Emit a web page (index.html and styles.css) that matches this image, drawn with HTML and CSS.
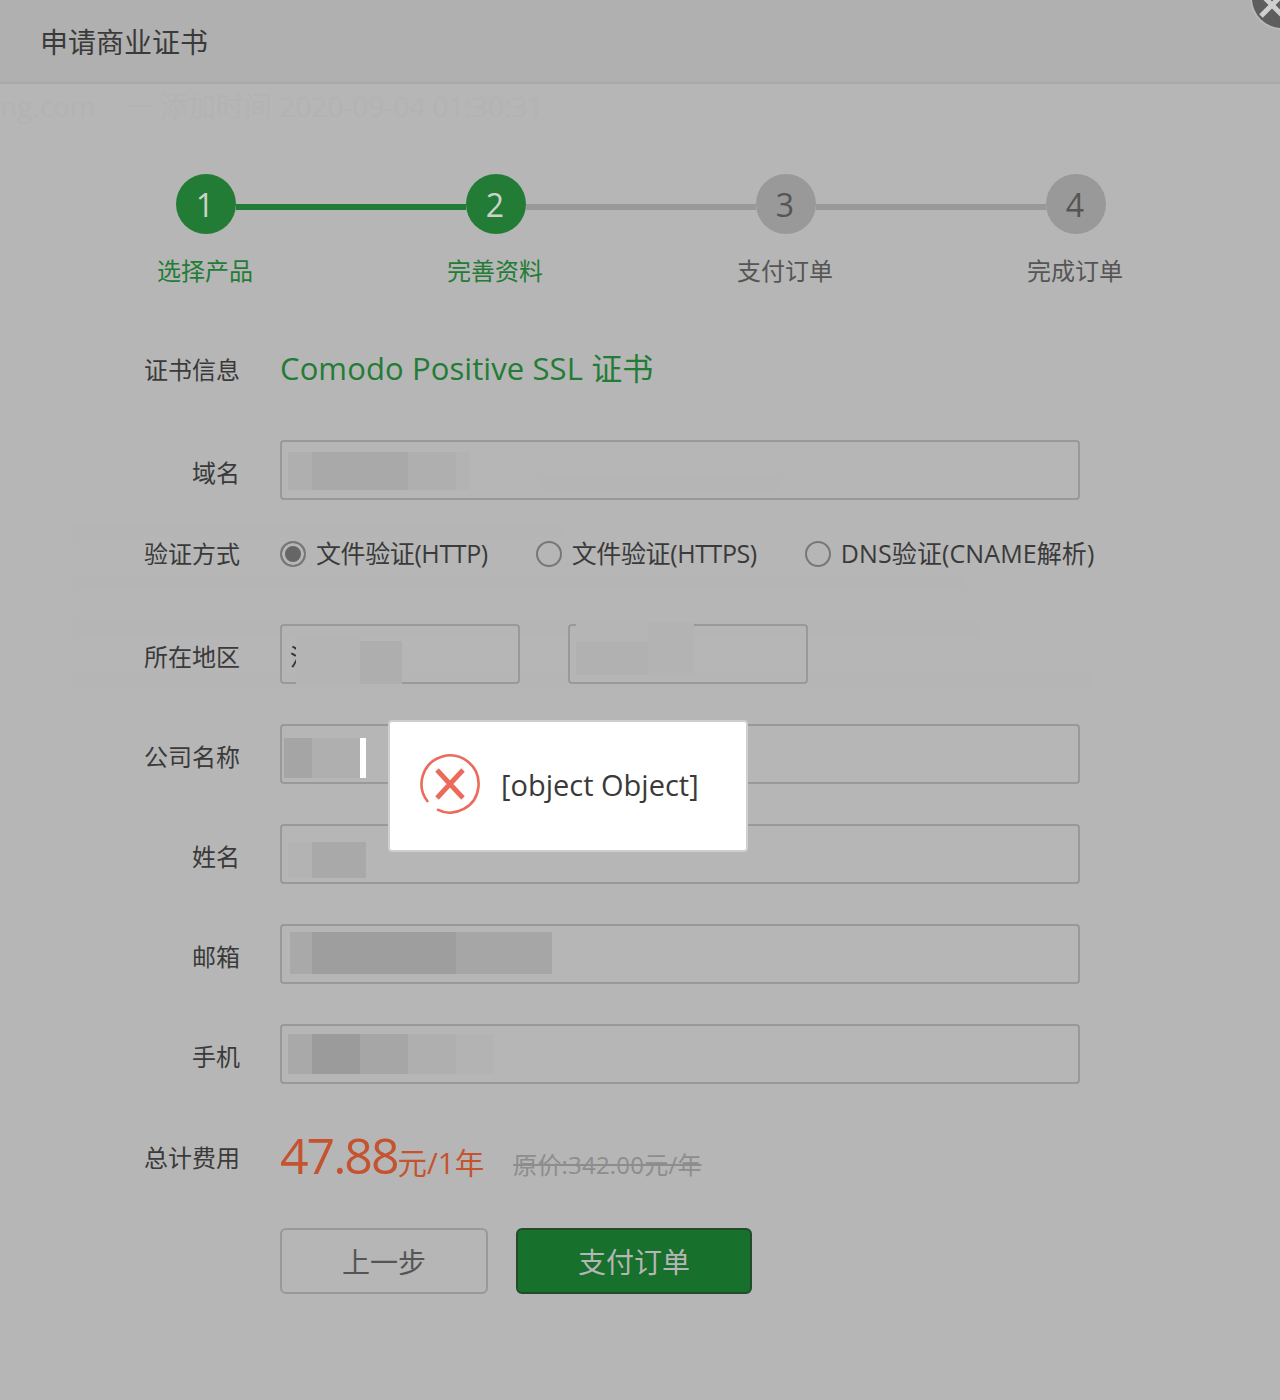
FILE: index.html
```html
<!DOCTYPE html>
<html lang="zh-CN">
<head>
<meta charset="utf-8">
<title>申请商业证书</title>
<link rel="stylesheet" href="styles.css">
</head>
<body>
<div class="page">
  <div class="behind" aria-hidden="true">
    <div class="behind-text"><span class="behind-host">ng.com</span><span class="behind-dash">一</span><span>添加时间 2020-09-04 01:30:31</span></div>
    <i class="behind-bar bar-a"></i>
    <i class="behind-bar bar-b"></i>
    <i class="behind-bar bar-c"></i>
    <i class="behind-bar bar-d"></i>
    <i class="behind-bar bar-e"></i>
  </div>

  <header class="header"><h1 class="title">申请商业证书</h1></header>
  <button class="close" aria-label="关闭"><svg viewBox="0 0 60 60" width="60" height="60"><path d="M9 26 31 48M31 26 9 48" stroke="#cfcfcf" stroke-width="5" fill="none"/></svg></button>

  <section class="stepper">
    <div class="rail">
      <span class="dot done">1</span><span class="line done"></span>
      <span class="dot done">2</span><span class="line"></span>
      <span class="dot">3</span><span class="line"></span>
      <span class="dot">4</span>
    </div>
    <div class="step-labels">
      <span class="step-label done">选择产品</span>
      <span class="step-label done">完善资料</span>
      <span class="step-label">支付订单</span>
      <span class="step-label">完成订单</span>
    </div>
  </section>

  <form class="form">
    <div class="row row-cert">
      <label class="label">证书信息</label>
      <div class="cert-name">Comodo Positive SSL 证书</div>
    </div>
    <div class="row row-input">
      <label class="label low">域名</label>
      <div class="input wide">
        <div class="mosaic mo-domain"><i class="m w24 c1"></i><i class="m w96 c2"></i><i class="m w48 c3"></i><i class="m w14 c4"></i></div>
      </div>
    </div>
    <div class="row row-radio">
      <label class="label">验证方式</label>
      <div class="radios">
        <span class="radio tight on"><i class="radio-mark"></i>文件验证(HTTP)</span>
        <span class="radio tight"><i class="radio-mark"></i>文件验证(HTTPS)</span>
        <span class="radio loose"><i class="radio-mark"></i>DNS验证(CNAME解析)</span>
      </div>
    </div>
    <div class="row row-input">
      <label class="label low">所在地区</label>
      <div class="region">
        <div class="input half">
          <span class="under">河</span>
          <div class="mosaic mo-region1"><i class="m w64 c5"></i><i class="m w42 c3b lowered-s"></i></div>
        </div>
        <div class="input half">
          <div class="mosaic mo-region2"><i class="m w72 step-block"></i><i class="m w46 c6"></i></div>
        </div>
      </div>
    </div>
    <div class="row row-input">
      <label class="label low">公司名称</label>
      <div class="input wide">
        <div class="mosaic mo-company"><i class="m w28 c7"></i><i class="m w48 c3"></i><i class="m w6 white"></i></div>
      </div>
    </div>
    <div class="row row-input">
      <label class="label low">姓名</label>
      <div class="input wide">
        <div class="mosaic mo-name"><i class="m w24 c6"></i><i class="m w54 c2"></i></div>
      </div>
    </div>
    <div class="row row-input">
      <label class="label low">邮箱</label>
      <div class="input wide">
        <div class="mosaic mo-email"><i class="m w22 c2"></i><i class="m w144 c8"></i><i class="m w96 c9"></i></div>
      </div>
    </div>
    <div class="row row-input">
      <label class="label low">手机</label>
      <div class="input wide">
        <div class="mosaic mo-phone"><i class="m w24 c2"></i><i class="m w48 c10"></i><i class="m w48 c9"></i><i class="m w48 c3"></i><i class="m w38 c4"></i></div>
      </div>
    </div>
    <div class="row row-total">
      <label class="label">总计费用</label>
      <div class="price">
        <span class="amount">47.88</span><span class="unit">元/1年</span>
        <s class="origin">原价:342.00元/年</s>
      </div>
    </div>
    <div class="row row-actions">
      <button type="button" class="btn btn-back">上一步</button>
      <button type="button" class="btn btn-pay">支付订单</button>
    </div>
  </form>

  <div class="toast">
    <svg class="toast-icon" viewBox="0 0 60 60" width="60" height="60">
      <path d="M17 55.300A28.500 28.500 0 1 0 8 48" fill="none" stroke="#ec6a5c" stroke-width="2.600"/>
      <path d="M17 16 43 44M43 16 17 44" fill="none" stroke="#ec6a5c" stroke-width="4.800"/>
    </svg>
    <span class="toast-text">[object Object]</span>
  </div>
</div>
</body>
</html>
```
FILE: styles.css
```css
* { box-sizing: border-box; }
html, body { margin: 0; padding: 0; }
body {
  font-family: "Open Sans", "Noto Sans CJK SC", sans-serif;
  color: #3a3a3a;
  background: #b6b6b6;
}
.page {
  position: relative;
  width: 1280px;
  height: 1400px;
  overflow: hidden;
  background: #b6b6b6;
}
.behind { position: absolute; inset: 0; }
.behind-text {
  position: absolute;
  left: 0;
  top: 88px;
  display: flex;
  font-size: 28px;
  line-height: 36px;
  color: #b3b3b3;
  white-space: nowrap;
}
.behind-host { width: 126px; }
.behind-dash { width: 34px; }
.behind-bar { position: absolute; display: block; background: #b5b5b5; }
.bar-a { left: 73px; top: 525px; width: 490px; height: 13px; }
.bar-b { left: 73px; top: 576px; width: 892px; height: 14px; }
.bar-c { left: 73px; top: 622px; width: 907px; height: 16px; }
.bar-d { left: 73px; top: 672px; width: 1017px; height: 16px; }
.bar-e { left: 540px; top: 476px; width: 240px; height: 14px; }

.header {
  position: relative;
  height: 84px;
  padding-left: 40px;
  display: flex;
  align-items: center;
  background: #b0b0b0;
  border-bottom: 2px solid #a9a9a9;
}
.title {
  margin: 0;
  font-size: 28px;
  font-weight: 400;
  line-height: 84px;
  color: #3a3a3a;
  font-family: "Noto Sans CJK SC", sans-serif;
}
.close {
  position: absolute;
  left: 1252px;
  top: -32px;
  width: 60px;
  height: 60px;
  padding: 0;
  border: 0;
  border-radius: 50%;
  background: #5e5e5e;
  box-shadow: 0 0 0 2px #b9b9b9;
}
.close svg { display: block; }

.stepper { position: relative; padding-top: 90px; }
.rail {
  display: flex;
  align-items: flex-start;
  width: 930px;
  margin-left: 176px;
}
.dot {
  flex: none;
  width: 60px;
  height: 60px;
  border-radius: 50%;
  background: #999;
  color: #555;
  font-size: 32px;
  line-height: 62px;
  text-align: center;
  padding-right: 2px;
}
.dot.done { background: #237c35; color: #c9d3cb; }
.line {
  flex: 1;
  height: 6px;
  margin-top: 30px;
  background: #999;
}
.line.done { background: #237c35; }
.step-labels {
  display: grid;
  grid-template-columns: repeat(4, 290px);
  margin-left: 60px;
  margin-top: 16px;
}
.step-label {
  text-align: center;
  font-size: 24px;
  line-height: 40px;
  color: #555;
  font-family: "Noto Sans CJK SC", sans-serif;
}
.step-label.done { color: #237c35; }

.form { position: relative; display: flex; flex-direction: column; margin-top: 50px; }
.row { display: flex; align-items: center; gap: 40px; }
.label {
  flex: none;
  width: 240px;
  padding-bottom: 2px;
  text-align: right;
  font-size: 24px;
  line-height: 40px;
  color: #3a3a3a;
  font-family: "Noto Sans CJK SC", sans-serif;
}
.label.low { padding-top: 4px; padding-bottom: 0; }
.row-cert { height: 60px; margin-bottom: 40px; }
.cert-name {
  padding-bottom: 4px;
  font-size: 31px;
  line-height: 56px;
  letter-spacing: 0.1px;
  color: #237c35;
}
.row-input { height: 60px; margin-bottom: 40px; }
.row-radio { height: 60px; margin-top: -16px; margin-bottom: 40px; }
.input {
  position: relative;
  height: 60px;
  border: 2px solid #999;
  border-radius: 4px;
}
.input.wide { width: 800px; }
.input.half { width: 240px; }
.region { display: flex; gap: 48px; }
.radios { display: flex; gap: 48px; padding-bottom: 2px; }
.radio {
  display: flex;
  align-items: center;
  gap: 10px;
  font-size: 25px;
  line-height: 40px;
  color: #3a3a3a;
}
.radio.tight { letter-spacing: -0.4px; }
.radio.loose { letter-spacing: 0.1px; }
.radio-mark {
  flex: none;
  width: 26px;
  height: 26px;
  margin-top: 2px;
  border: 2px solid #777;
  border-radius: 50%;
}
.radio.on .radio-mark {
  background: #666;
  box-shadow: inset 0 0 0 3px #b6b6b6;
}
.mosaic { position: absolute; display: flex; }
.m { display: block; height: 100%; }
.w6 { width: 6px; } .w14 { width: 14px; } .w22 { width: 22px; }
.w24 { width: 24px; } .w28 { width: 28px; } .w38 { width: 38px; } .w42 { width: 42px; }
.w46 { width: 46px; } .w48 { width: 48px; } .w54 { width: 54px; } .w64 { width: 64px; } .w72 { width: 72px; }
.w96 { width: 96px; } .w144 { width: 144px; }
.c1 { background: #afafaf; } .c2 { background: #a9a9a9; } .c3 { background: #afafaf; }
.c3b { background: #aeaeae; } .c4 { background: #b3b3b3; } .c5 { background: #b4b4b4; }
.c6 { background: #b3b3b3; } .c7 { background: #a5a5a5; } .c8 { background: #9e9e9e; }
.c9 { background: #a6a6a6; } .c10 { background: #9b9b9b; } .white { background: #fff; }
.lowered-s { height: 43px; margin-top: 6px; }
.step-block { background: linear-gradient(#b5b5b5 20px, #b1b1b1 20px); }
.mo-domain { left: 6px; top: 10px; height: 38px; }
.mo-region1 { left: 14px; top: 9px; height: 49px; }
.mo-region2 { left: 6px; top: -4px; height: 53px; }
.mo-company { left: 2px; top: 12px; height: 40px; }
.mo-name { left: 6px; top: 16px; height: 36px; }
.mo-email { left: 8px; top: 6px; height: 42px; }
.mo-phone { left: 6px; top: 8px; height: 40px; }
.under {
  position: absolute;
  left: 8px;
  top: 10px;
  font-size: 24px;
  line-height: 40px;
  color: #333;
  font-family: "Noto Sans CJK SC", sans-serif;
}
.row-total { height: 60px; margin-top: 4px; margin-bottom: 40px; }
.price { display: flex; align-items: baseline; padding-top: 2px; color: #c4532f; }
.amount { font-size: 50px; line-height: 60px; letter-spacing: -2px; }
.unit { font-size: 29.500px; line-height: 60px; }
.origin { margin-left: 29px; font-size: 24px; letter-spacing: 0.2px; color: #8d8d8d; }
.row-actions { gap: 28px; padding-left: 280px; }
.btn {
  height: 66px;
  padding: 0;
  border-radius: 6px;
  font-size: 28px;
  font-family: "Noto Sans CJK SC", sans-serif;
}
.btn-back {
  width: 208px;
  background: #b6b6b6;
  border: 2px solid #999;
  color: #555;
}
.btn-pay {
  width: 236px;
  background: #17702c;
  border: 2px solid #234a2b;
  color: #b6b6b6;
}
.toast {
  position: absolute;
  left: 388px;
  top: 720px;
  width: 360px;
  height: 132px;
  padding-left: 30px;
  display: flex;
  align-items: center;
  gap: 21px;
  background: #fff;
  border: 2px solid #cfcfcf;
  border-radius: 4px;
}
.toast-icon { flex: none; margin-top: -4px; filter: blur(0.4px); }
.toast-text { padding-bottom: 2px; font-size: 29px; line-height: 40px; color: #3a3a3a; }
```
